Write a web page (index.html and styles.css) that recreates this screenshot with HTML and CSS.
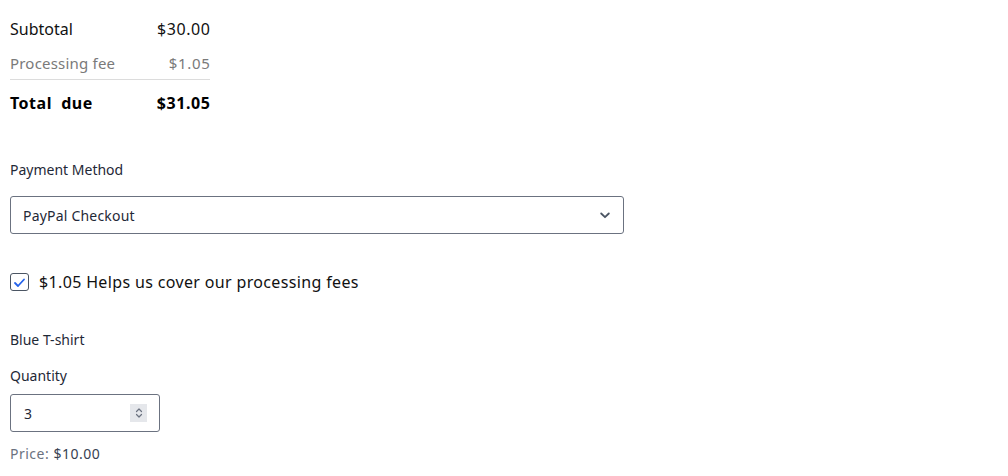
FILE: index.html
```html
<!DOCTYPE html>
<html>
<head>
<meta charset="utf-8">
<link rel="stylesheet" href="styles.css">
</head>
<body>
<div class="page">
  <div class="summary">
    <div class="row">
      <span>Subtotal</span><span class="amt">$30.00</span>
    </div>
    <div class="row fee">
      <span>Processing fee</span><span class="amt">$1.05</span>
    </div>
    <div class="row total">
      <span>Total&nbsp; due</span><span class="amt">$31.05</span>
    </div>
  </div>

  <div class="label pm-label">Payment Method</div>
  <div class="select">
    <span>PayPal Checkout</span>
    <svg class="chev" width="10" height="7" viewBox="0 0 10 7"><path d="M1.2 1.5 L5 5.2 L8.8 1.5" fill="none" stroke="#4b5563" stroke-width="1.8" stroke-linecap="round" stroke-linejoin="round"/></svg>
  </div>

  <label class="check-row">
    <span class="checkbox">
      <svg width="13" height="11" viewBox="0 0 13 11"><path d="M2 6 L5 9 L11 2.5" fill="none" stroke="#2563eb" stroke-width="1.8" stroke-linecap="round" stroke-linejoin="round"/></svg>
    </span>
    <span class="check-text">$1.05 Helps us cover our processing fees</span>
  </label>

  <div class="label item-name">Blue T-shirt</div>
  <div class="label qty-label">Quantity</div>
  <div class="number">
    <span>3</span>
    <span class="spin">
      <svg width="8" height="12" viewBox="0 0 8 12"><path d="M1.5 4.5 L4 2 L6.5 4.5 M1.5 7.5 L4 10 L6.5 7.5" fill="none" stroke="#6b7280" stroke-width="1.2" stroke-linecap="round" stroke-linejoin="round"/></svg>
    </span>
  </div>
  <div class="price"><span class="price-label">Price:</span> <span class="price-value">$10.00</span></div>
</div>
</body>
</html>
```

FILE: styles.css
```css
* { box-sizing: border-box; }
html, body { margin: 0; padding: 0; background: #fff; }
body {
  font-family: "Noto Sans", "Open Sans", sans-serif;
  color: #1f2937;
}
.page {
  padding: 12px 10px 0 10px;
  display: flex;
  flex-direction: column;
  align-items: flex-start;
}
.summary {
  width: 200px;
  display: flex;
  flex-direction: column;
}
.row {
  display: flex;
  justify-content: space-between;
  align-items: center;
  height: 34px;
  font-size: 16px;
  color: #111;
}
.row .amt { letter-spacing: 0.6px; margin-right: -0.6px; }
.row.fee {
  font-size: 15px;
  color: #7a7a7a;
  letter-spacing: 0.2px;
  border-bottom: 1px solid #dcdcdc;
}
.row.fee .amt { letter-spacing: 0.7px; }
.row.total {
  height: 46px;
  font-weight: 700;
  color: #000;
  letter-spacing: 0.5px;
}
.row.total .amt { letter-spacing: 0.6px; }
.label {
  font-size: 14px;
  line-height: 20px;
  color: #1f2937;
}
.pm-label { margin-top: 34px; }
.select {
  margin-top: 16px;
  width: 614px;
  height: 38px;
  border: 1px solid #6b7280;
  border-radius: 3px;
  display: flex;
  align-items: center;
  justify-content: space-between;
  padding: 0 13px 0 12px;
  font-size: 14px;
  letter-spacing: 0.2px;
  color: #1f2937;
}
.check-row {
  margin-top: 37px;
  height: 22px;
  display: flex;
  align-items: center;
  gap: 10px;
}
.checkbox {
  width: 19px;
  height: 18px;
  border: 1px solid #4b5563;
  border-radius: 3px;
  display: flex;
  align-items: center;
  justify-content: center;
}
.check-text {
  font-size: 16px;
  line-height: 22px;
  letter-spacing: 0.35px;
  color: #111;
}
.item-name { margin-top: 37px; }
.qty-label { margin-top: 16px; }
.number {
  margin-top: 8px;
  width: 150px;
  height: 38px;
  border: 1px solid #6b7280;
  border-radius: 3px;
  display: flex;
  align-items: center;
  justify-content: space-between;
  padding: 0 12px 0 13px;
  font-size: 14px;
  color: #1f2937;
}
.spin {
  width: 17px;
  height: 18px;
  background: #e5e7eb;
  display: flex;
  align-items: center;
  justify-content: center;
}
.price {
  margin-top: 12px;
  font-size: 14px;
  line-height: 20px;
  letter-spacing: 0.5px;
}
.price-label { color: #6b7280; }
.price-value { color: #374151; }
```
